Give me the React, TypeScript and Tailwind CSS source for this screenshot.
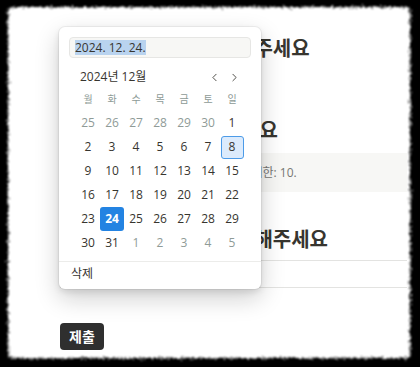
import React from "react";
import { ChevronLeft, ChevronRight } from "lucide-react";

const weeks: { d: number; o?: boolean; sel?: boolean; today?: boolean }[][] = [
  [{ d: 25, o: true }, { d: 26, o: true }, { d: 27, o: true }, { d: 28, o: true }, { d: 29, o: true }, { d: 30, o: true }, { d: 1 }],
  [{ d: 2 }, { d: 3 }, { d: 4 }, { d: 5 }, { d: 6 }, { d: 7 }, { d: 8, today: true }],
  [{ d: 9 }, { d: 10 }, { d: 11 }, { d: 12 }, { d: 13 }, { d: 14 }, { d: 15 }],
  [{ d: 16 }, { d: 17 }, { d: 18 }, { d: 19 }, { d: 20 }, { d: 21 }, { d: 22 }],
  [{ d: 23 }, { d: 24, sel: true }, { d: 25 }, { d: 26 }, { d: 27 }, { d: 28 }, { d: 29 }],
  [{ d: 30 }, { d: 31 }, { d: 1, o: true }, { d: 2, o: true }, { d: 3, o: true }, { d: 4, o: true }, { d: 5, o: true }],
];

const days = ["월", "화", "수", "목", "금", "토", "일"];

export default function App() {
  return (
    <div className="w-[420px] h-[367px] bg-black overflow-hidden pt-[7px] pl-[8px] font-['Open_Sans','Noto_Sans_CJK_KR',sans-serif] text-[#37352f]">
      <svg width="0" height="0" className="absolute">
        <filter id="torn" x="-5%" y="-5%" width="110%" height="110%">
          <feTurbulence type="fractalNoise" baseFrequency="0.9" numOctaves="2" seed="3" result="n" />
          <feDisplacementMap in="SourceGraphic" in2="n" scale="8" xChannelSelector="R" yChannelSelector="G" result="d" />
          <feGaussianBlur in="d" stdDeviation="0.8" />
        </filter>
      </svg>
      <div className="relative w-[402px] h-[351px]">
        <div className="absolute inset-0 bg-white rounded-[4px] [filter:url(#torn)]" />
        <div className="absolute inset-[3px] overflow-hidden">
          <div className="flex flex-col pl-[49px] pt-[26px] w-[600px]">
            <div className="h-[26px] text-[20px] font-bold leading-[26px]">희망하는 날짜를 선택해주세요</div>
            <div className="h-[56px]" />
            <div className="h-[26px] text-[20px] font-bold leading-[26px]">참가 인원 수를 입력하세요</div>
            <div className="mt-[9px] h-[39px] bg-[#f7f7f5] flex items-center px-[12px] text-[12px] text-[#787774]">
              한 번에 신청할 수 있는 최대 인원 수 제한: 10.
            </div>
            <div className="mt-[35px] h-[26px] text-[20px] font-bold leading-[26px]">추가로 요청사항을 입력해주세요</div>
            <div className="mt-[7px] h-[28px] border-t border-b border-[#e3e3e1]" />
            <div className="mt-[35px]">
              <button className="h-[27px] px-[9px] rounded-[4px] bg-[#2f2f2f] text-white text-[14px] font-bold leading-[27px]">
                제출
              </button>
            </div>
          </div>

          <div className="absolute left-[48px] top-[17px] w-[202px] h-[262px] bg-white rounded-[6px] shadow-[0_0_0_1px_rgba(15,15,15,0.05),0_3px_6px_rgba(15,15,15,0.1),0_9px_24px_rgba(15,15,15,0.2)] flex flex-col">
            <div className="mt-[10px] mx-[10px] h-[21px] bg-[#f7f7f5] border border-[#e6e6e4] rounded-[4px] flex items-center px-[5px] text-[12px]">
              <span className="bg-[#b9d3ef] leading-[15px]">2024. 12. 24.</span>
            </div>
            <div className="mt-[10px] h-[18px] flex items-center pl-[21px] pr-[20px] text-[12px]">
              <span className="flex-1">2024년 12월</span>
              <ChevronLeft size={13} strokeWidth={1.6} className="mr-[7px]" />
              <ChevronRight size={13} strokeWidth={1.6} />
            </div>
            <div className="mx-[17px] mt-[1px] grid grid-cols-7">
              {days.map((d) => (
                <div key={d} className="h-[24px] flex items-center justify-center text-[10px] text-[#8d9a96]">{d}</div>
              ))}
              {weeks.flat().map((c, i) => (
                <div key={i} className="h-[24px] flex items-center justify-center">
                  {c.sel ? (
                    <div className="w-[24px] h-[24px] rounded-[3px] bg-[#2383e2] text-white font-bold text-[12px] flex items-center justify-center">{c.d}</div>
                  ) : c.today ? (
                    <div className="w-[23px] h-[23px] rounded-[3px] bg-[#dcebfc] border border-[#4c9be8] text-[12px] flex items-center justify-center">{c.d}</div>
                  ) : (
                    <span className={c.o ? "text-[12px] text-[#8f9b97]" : "text-[12px]"}>{c.d}</span>
                  )}
                </div>
              ))}
            </div>
            <div className="mt-[6px] border-t border-[#ececea] h-[25px] flex items-center pl-[12px] text-[12px]">삭제</div>
          </div>
        </div>
      </div>
    </div>
  );
}
